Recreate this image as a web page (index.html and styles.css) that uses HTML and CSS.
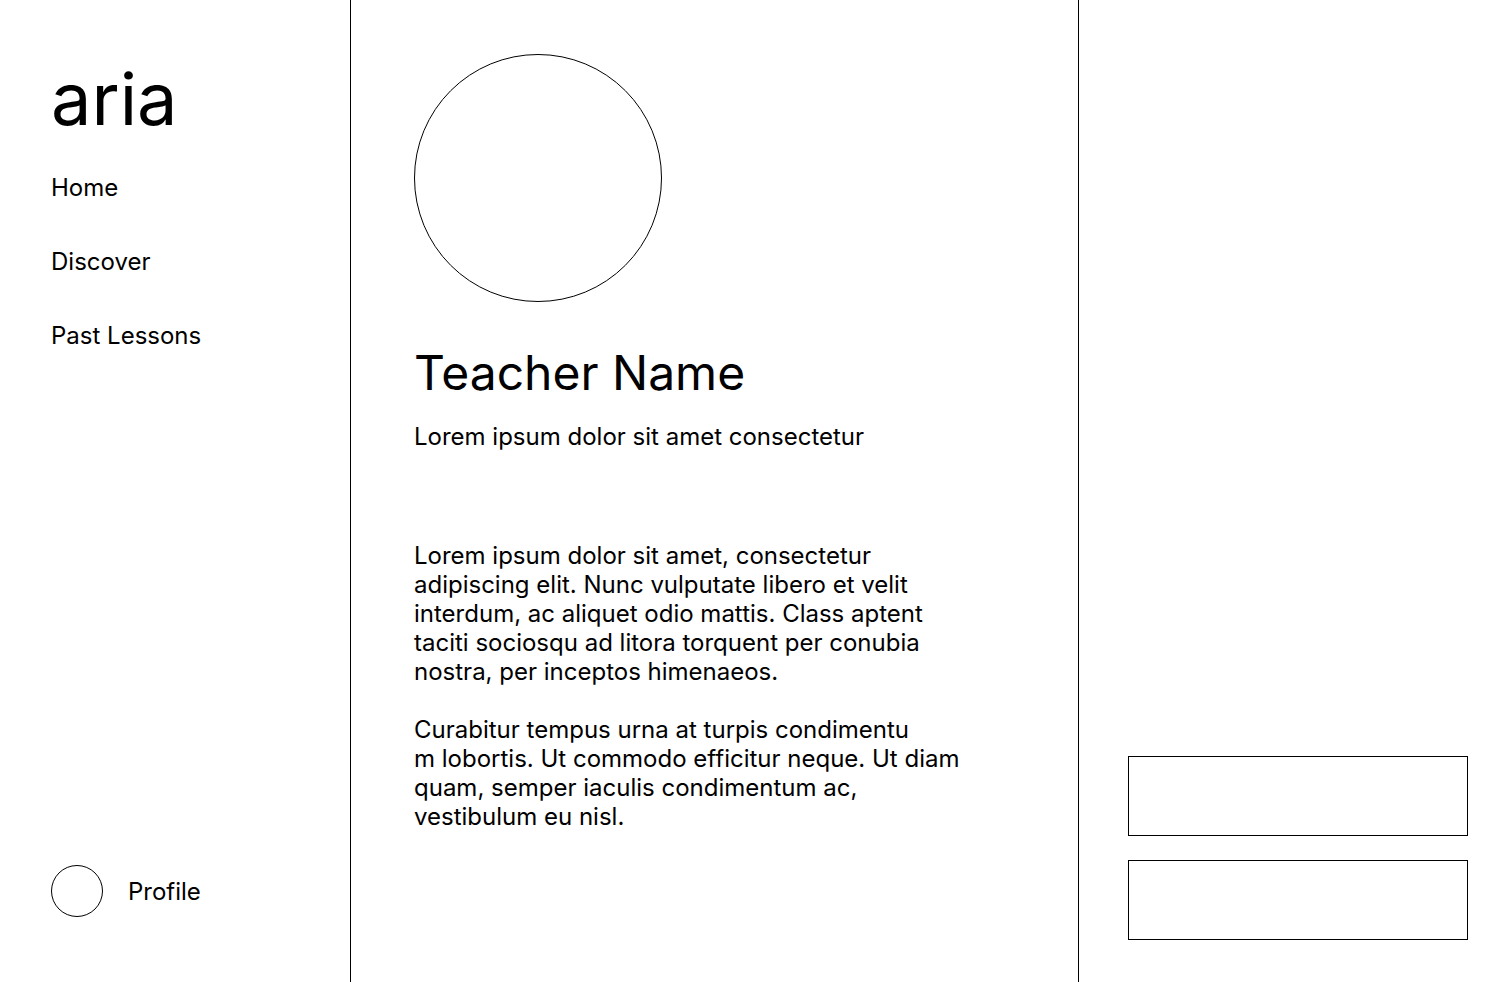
FILE: index.html
```html
<!DOCTYPE html>
<html lang="en">
<head>
<meta charset="utf-8">
<title>aria</title>
<link rel="stylesheet" href="styles.css">
</head>
<body>
<div class="app">
  <aside class="sidebar">
    <div class="logo">aria</div>
    <nav class="nav">
      <a class="nav-item">Home</a>
      <a class="nav-item">Discover</a>
      <a class="nav-item">Past Lessons</a>
    </nav>
    <div class="profile">
      <span class="profile-avatar"></span>
      <span class="profile-label">Profile</span>
    </div>
  </aside>
  <main class="main">
    <div class="teacher-avatar"></div>
    <h1 class="teacher-name">Teacher Name</h1>
    <p class="teacher-sub">Lorem ipsum dolor sit amet consectetur</p>
    <div class="bio">
      <p>Lorem ipsum dolor sit amet, consectetur adipiscing elit. Nunc vulputate libero et velit interdum, ac aliquet odio mattis. Class aptent taciti sociosqu ad litora torquent per conubia nostra, per inceptos himenaeos.</p>
      <p>Curabitur tempus urna at turpis condimentu<br>m lobortis. Ut commodo efficitur neque. Ut diam quam, semper iaculis condimentum ac, vestibulum eu nisl.</p>
    </div>
  </main>
  <section class="aside">
    <div class="box"></div>
    <div class="box"></div>
  </section>
</div>
</body>
</html>
```

FILE: styles.css
```css
* { box-sizing: border-box; }
html, body { margin: 0; padding: 0; }
body {
  font-family: Inter, "Noto Sans", sans-serif;
  color: #000;
  background: #fff;
}
.app {
  display: flex;
  height: 982px;
}
.sidebar {
  width: 351px;
  flex: 0 0 351px;
  border-right: 1px solid #000;
  display: flex;
  flex-direction: column;
  padding: 55px 0 65px 51px;
}
.logo {
  font-size: 72px;
  line-height: 87px;
  font-weight: 400;
}
.nav {
  display: flex;
  flex-direction: column;
  gap: 45px;
  margin-top: 31px;
}
.nav-item {
  font-size: 24px;
  line-height: 29px;
  color: #000;
  text-decoration: none;
}
.profile {
  margin-top: auto;
  display: flex;
  align-items: center;
  gap: 25px;
}
.profile-avatar {
  width: 52px;
  height: 52px;
  border: 1px solid #000;
  border-radius: 50%;
}
.profile-label {
  font-size: 24px;
  line-height: 29px;
}
.main {
  width: 728px;
  flex: 0 0 728px;
  border-right: 1px solid #000;
  padding: 54px 0 0 63px;
}
.teacher-avatar {
  width: 248px;
  height: 248px;
  border: 1px solid #000;
  border-radius: 50%;
}
.teacher-name {
  margin: 42px 0 0;
  font-size: 48px;
  line-height: 58px;
  font-weight: 400;
}
.teacher-sub {
  margin: 20px 0 0;
  font-size: 24px;
  line-height: 29px;
}
.bio {
  margin-top: 90px;
  width: 552px;
  font-size: 24px;
  line-height: 29px;
}
.bio p { margin: 0 0 29px; }
.aside {
  flex: 1;
  display: flex;
  flex-direction: column;
  justify-content: flex-end;
  gap: 24px;
  padding: 0 44px 42px 49px;
}
.box {
  height: 80px;
  border: 1px solid #000;
}
```
